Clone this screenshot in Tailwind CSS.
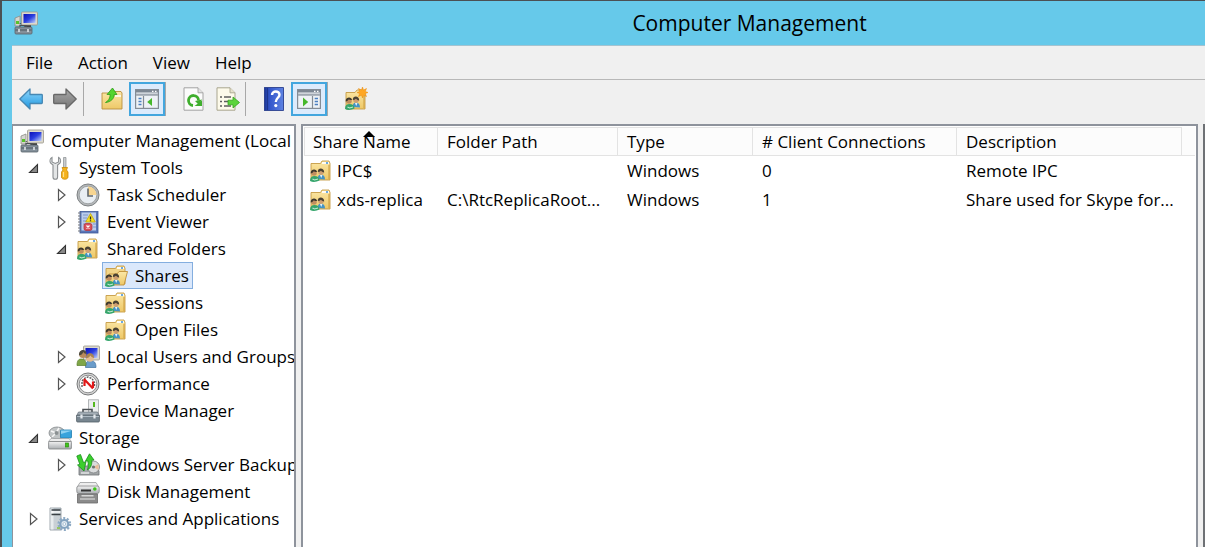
<!DOCTYPE html>
<html lang="en">
<head>
  <meta charset="UTF-8" />
  <meta name="viewport" content="width=device-width, initial-scale=1.0"/>
  <title>Computer Management</title>
  <script src="https://cdn.jsdelivr.net/npm/@tailwindcss/browser@4"></script>
</head>
<body class="h-screen overflow-hidden bg-[#66c9ea] border-t border-l-2 border-[#4b5054] text-black text-[17px] leading-[27px] font-['Open_Sans',sans-serif] flex flex-col">

  <!-- Icon set -->
  <svg class="absolute size-0" aria-hidden="true">
    <defs>
      <linearGradient id="g-screen" x1="0" y1="0" x2="1" y2="1">
        <stop offset="0" stop-color="#0a10b8"/><stop offset=".5" stop-color="#2b3fe0"/><stop offset="1" stop-color="#c3d4fb"/>
      </linearGradient>
      <linearGradient id="g-folder" x1="0" y1="0" x2="0" y2="1">
        <stop offset="0" stop-color="#fbe7a6"/><stop offset="1" stop-color="#eec867"/>
      </linearGradient>
      <linearGradient id="g-blue" x1="0" y1="0" x2="0" y2="1">
        <stop offset="0" stop-color="#8fd6fb"/><stop offset="1" stop-color="#1e97e0"/>
      </linearGradient>
      <linearGradient id="g-gray" x1="0" y1="0" x2="0" y2="1">
        <stop offset="0" stop-color="#a8a8a8"/><stop offset="1" stop-color="#757575"/>
      </linearGradient>
      <linearGradient id="g-metal" x1="0" y1="0" x2="0" y2="1">
        <stop offset="0" stop-color="#f2f2f2"/><stop offset="1" stop-color="#a9adb0"/>
      </linearGradient>
      <linearGradient id="g-help" x1="0" y1="0" x2="1" y2="0">
        <stop offset="0" stop-color="#1c3697"/><stop offset=".3" stop-color="#3558cc"/><stop offset="1" stop-color="#5f83e2"/>
      </linearGradient>
    </defs>

    <symbol id="i-computer" viewBox="0 0 24 24">
      <path d="M1 7l5-2v10H1z" fill="#d6d6d0" stroke="#8b8b86" stroke-width=".8"/>
      <path d="M2 10h3v3H2z" fill="#58c32a"/>
      <path d="M5 12l6 4h6v-2z" fill="#333"/>
      <rect x="7.500" y="1" width="16" height="13" rx="1" fill="#dcd9cd" stroke="#9a978c" stroke-width=".8"/>
      <rect x="9.500" y="3" width="12" height="9" fill="url(#g-screen)"/>
      <path d="M6 16v-1.500h6V16" fill="none" stroke="#4b5054" stroke-width="1.200"/>
      <rect x="1" y="16" width="17" height="7" rx="1" fill="#84909a" stroke="#59636b" stroke-width=".8"/>
      <path d="M1.500 19h16" stroke="#4d565e" stroke-width="1"/>
      <path d="M5 18v3M14 18v3" stroke="#dfe4e8" stroke-width="1.600"/>
    </symbol>

    <symbol id="i-tools" viewBox="0 0 24 24">
      <path d="M4 1.500c-2 1-2.500 3.500-1.500 5.500L5 9v12a2.300 2.300 0 0 0 4.600 0V9l2.500-2c1-2 .5-4.500-1.500-5.500V6L7.300 7.500 4 6z" fill="#e3e5e6" stroke="#8a8e91" stroke-width="1.100"/>
      <path d="M15.500 1.500h2.500V12h-2.500z" fill="#c9cccf" stroke="#8a8e91" stroke-width=".7"/>
      <path d="M14 11.500h5.500l-1 2.500 1.500 2v5c0 3-6.500 3-6.500 0v-5l1.500-2z" fill="#f5b21c" stroke="#c98a08" stroke-width=".8"/>
      <path d="M15.500 16v5" stroke="#fde08a" stroke-width="1.200"/>
    </symbol>

    <symbol id="i-clock" viewBox="0 0 24 24">
      <circle cx="12" cy="12" r="11" fill="#b5b8ba" stroke="#7e8284"/>
      <circle cx="12" cy="12" r="8.800" fill="#e9eef3" stroke="#8c9092" stroke-width=".7"/>
      <path d="M12 12V3.500a8.500 8.500 0 0 1 8.500 8.500z" fill="#f7d591"/>
      <path d="M12 5.500V13h5" fill="none" stroke="#62686d" stroke-width="1.600"/>
    </symbol>

    <symbol id="i-event" viewBox="0 0 24 24">
      <rect x="4" y="1.500" width="18" height="21.500" fill="#5a76b8" stroke="#3d5797" stroke-width=".8"/>
      <rect x="5.500" y="2.500" width="14.500" height="18" fill="#bccdec"/>
      <path d="M7 5h5M7 8h4M7 11h3M7 14h3M17 14h3M17 17h3" stroke="#7f97c8" stroke-width="1"/>
      <path d="M14.500 3.500l4.800 8.500H9.700z" fill="#f7e022" stroke="#bfa30f" stroke-width=".8"/>
      <path d="M14.500 6.500v3M14.500 10.200v1" stroke="#2b2b2b" stroke-width="1.300"/>
      <rect x="8" y="13.500" width="8" height="7" rx="2" fill="#d9505a" stroke="#b22f3a" stroke-width=".7"/>
      <path d="M10.500 15.500l3 3m0-3l-3 3" stroke="#fff" stroke-width="1.300"/>
      <path d="M2 3h3M2 6h3M2 9h3M2 12h3M2 15h3M2 18h3M2 21h3" stroke="#72777d" stroke-width="1.200"/>
    </symbol>

    <symbol id="i-people" viewBox="0 0 24 24">
      <path d="M8.500 20c0-3 1.300-4.500 3.500-4.500s4 1.500 4 5z" fill="#4593c4"/>
      <path d="M11 16l1.200 3 1.300-3z" fill="#e9f3fa"/>
      <path d="M1 22c0-3.500 1.500-5 4.500-5s5 1.500 5 4.500c-3 1.500-6.500 2-9.500.5z" fill="#35a56c"/>
      <path d="M3.500 20l2 1 3.500-1" stroke="#c1ead2" stroke-width="1.100" fill="none"/>
      <circle cx="5" cy="14" r="2.800" fill="#c08e60"/>
      <path d="M1.700 14.500C1 9.500 8 9.200 8 13c-1.800.2-2.800-.3-3.200-.8-.6 1-1.800 2-3.100 2.300z" fill="#3d382d"/>
      <circle cx="12" cy="13" r="2.800" fill="#cf9f72"/>
      <path d="M8.800 13c-.3-4.600 6.500-4.600 6.400.6-1.600-.3-2.800-1-3.200-1.800-.8.800-1.900 1.200-3.200 1.200z" fill="#4a4233"/>
    </symbol>

    <symbol id="i-share" viewBox="0 0 24 24">
      <path d="M2 4.500h9.500L13 2h7l1 2.500V21H2z" fill="url(#g-folder)" stroke="#c59b45" stroke-width=".9"/>
      <path d="M13 4h7" stroke="#fff" stroke-width="1.800"/>
      <path d="M17 4h2" stroke="#3c8ed8" stroke-width="1.600"/>
      <path d="M20 6v14" stroke="#d3a547" stroke-width="1.200"/>
      <use href="#i-people"/>
    </symbol>

    <symbol id="i-share-open" viewBox="0 0 24 24">
      <path d="M2 4.500h9.500L13 2h7l1 2.500V20H2z" fill="#f2d588" stroke="#c59b45" stroke-width=".9"/>
      <path d="M13 4h7" stroke="#fff" stroke-width="1.800"/>
      <path d="M17 4h2" stroke="#3c8ed8" stroke-width="1.600"/>
      <path d="M5 10h8l2-2.500h8.500L20 21H5z" fill="url(#g-folder)" stroke="#c08f38" stroke-width=".9"/>
      <use href="#i-people"/>
    </symbol>

    <symbol id="i-new-share" viewBox="0 0 24 24">
      <path d="M2 5.500h9L13 3h6l2 2.500V22H2z" fill="url(#g-folder)" stroke="#c59b45" stroke-width=".9"/>
      <path d="M20 9v12" stroke="#d3a547" stroke-width="1.200"/>
      <use href="#i-people"/>
      <path d="M18.500 0l1 3 3-1.500-1.200 3L24 5.500l-2.700 1 1.200 3-3-1.300-1 2.800-1-2.800-3 1.300 1.200-3-2.700-1 2.700-1-1.200-3 3 1.500z" fill="#ffa724" stroke="#e88a0b" stroke-width=".5"/>
    </symbol>

    <symbol id="i-users" viewBox="0 0 24 24">
      <rect x="7.500" y="1" width="16" height="14" rx="1" fill="#dcd9cd" stroke="#9a978c" stroke-width=".8"/>
      <rect x="9.500" y="3" width="12" height="10" fill="url(#g-screen)"/>
      <path d="M9.500 22.500c0-5 1.500-7 5-7s5.500 2 5.500 7z" fill="#6a9cca" stroke="#41719f" stroke-width=".7"/>
      <path d="M1 20.500c0-5 1.500-6.500 4.500-6.500s4.500 1.500 4.500 6.500z" fill="#7fa647" stroke="#5a7c2c" stroke-width=".7"/>
      <circle cx="6.800" cy="9.500" r="3.600" fill="#b98a5b"/>
      <path d="M3 10.500C2.500 3.500 11 3.500 10.500 9 9 9 8 8 7.500 7 6.500 9 5 10.200 3 10.500z" fill="#4d4a40"/>
      <circle cx="14" cy="13" r="3.800" fill="#e3bd93"/>
      <path d="M10 13.500c-.5-7 8.500-7 8-.5-2-.5-3-1.500-3.500-2.500-1 1.500-2.500 2.700-4.500 3z" fill="#a98552"/>
    </symbol>

    <symbol id="i-perf" viewBox="0 0 24 24">
      <circle cx="12" cy="12" r="11" fill="#d4d4d4" stroke="#77797a"/>
      <circle cx="12" cy="12" r="8.800" fill="#fff" stroke="#77797a" stroke-width=".8"/>
      <path d="M6 15V9l3-3 3-1 4 1.500 2.500 4V15" fill="none" stroke="#5c5c5c" stroke-width="1.400" stroke-dasharray="2 1"/>
      <path d="M8 7l9 9.500M8.500 7.500V14M17 16V9.500" fill="none" stroke="#e01818" stroke-width="2.200"/>
    </symbol>

    <symbol id="i-device" viewBox="0 0 24 24">
      <rect x="12.500" y=".8" width="10" height="14" fill="#eceeef" stroke="#a3a6a8" stroke-width=".8"/>
      <path d="M17 3h2v5h-2z" fill="#55b81f"/>
      <path d="M7 13v-2.500h9V13" fill="none" stroke="#4b5054" stroke-width="1.600"/>
      <path d="M2.500 13h19l2 4H.5z" fill="#a5afb7" stroke="#66707a" stroke-width=".7"/>
      <rect x=".6" y="16" width="22.800" height="7" rx="1" fill="#788690" stroke="#525d66" stroke-width=".8"/>
      <path d="M1 17.500h22" stroke="#aebac3" stroke-width="1"/>
      <path d="M5.500 15.500v4M18.500 15.500v4" stroke="#e4e9ed" stroke-width="2.200"/>
    </symbol>

    <symbol id="i-storage" viewBox="0 0 24 24">
      <ellipse cx="9" cy="7" rx="8" ry="6" fill="#bfc3c4" stroke="#85898b" stroke-width=".8"/>
      <path d="M3 5l5 2 3-5M8 7l-4 4" stroke="#f6f6f6" stroke-width="1.500" fill="none"/>
      <circle cx="8.500" cy="7" r="2" fill="#8b9092"/>
      <rect x="12.500" y="4" width="11" height="8" rx=".8" fill="#38a3dc" stroke="#1f7db0" stroke-width=".8"/>
      <path d="M13 8l10-3v-.5H13z" fill="#8fd2f2"/>
      <path d="M3 12.500h18l2.500 3H.5z" fill="#ececec" stroke="#96999b" stroke-width=".7"/>
      <rect x=".6" y="15.500" width="22.800" height="7.500" rx="1" fill="url(#g-metal)" stroke="#7d8082" stroke-width=".8"/>
      <rect x="17.500" y="17" width="3" height="4" fill="#3fc51a" stroke="#2a8c10" stroke-width=".7"/>
    </symbol>

    <symbol id="i-backup" viewBox="0 0 24 24">
      <path d="M3 13h17l3 5v4H3z" fill="#a2a6a8" stroke="#6d7173" stroke-width=".8"/>
      <circle cx="17.500" cy="14" r="6" fill="#dadcdd" stroke="#7c7f81" stroke-width=".8"/>
      <path d="M17.500 14l5-3v6z" fill="#e9bd9b"/>
      <circle cx="17.500" cy="14" r="1.600" fill="#6f7375"/>
      <path d="M.8 3L4.500 1.500l3 8L10 8.500 8 18 1.500 12l2.300-.7z" fill="#3ccf2d" stroke="#17911a" stroke-width=".8"/>
      <path d="M13.500.8L18 7l-2.300.3c.5 4-.8 7.500-4.200 9.700 1.200-3 .9-6 .3-9H9.500z" fill="#3ccf2d" stroke="#17911a" stroke-width=".8"/>
      <path d="M5 20h8" stroke="#e1e3e4" stroke-width="1.500"/>
    </symbol>

    <symbol id="i-disk" viewBox="0 0 24 24">
      <path d="M4 2.500h16l3 5H1z" fill="#eee" stroke="#9b9d9e" stroke-width=".8"/>
      <rect x=".8" y="6" width="22.400" height="7.500" rx="2" fill="url(#g-metal)" stroke="#858789" stroke-width=".8"/>
      <path d="M5 10.500h10" stroke="#333" stroke-width="2"/>
      <circle cx="18.800" cy="9" r="1.800" fill="#3fc51a"/>
      <path d="M1.500 14h20v9h-20z" fill="#8b8b8b" stroke="#6a6a6a" stroke-width=".8"/>
      <path d="M5.500 15h12v1.500h-12z" fill="#d8d8d8"/>
      <path d="M4 19h15" stroke="#c9c9c9" stroke-width="1.500"/>
    </symbol>

    <symbol id="i-services" viewBox="0 0 24 24">
      <path d="M2 1h11v22H2z" fill="#c9d0d5" stroke="#8c969d" stroke-width=".8"/>
      <path d="M2.500 1.500h3v21h-3z" fill="#e8ecee"/>
      <path d="M3.500 3h9M3.500 7.500h9" stroke="#3a4045" stroke-width="1.400"/>
      <path d="M3.500 5h9" stroke="#fff" stroke-width="1.200"/>
      <path d="M9 21h3" stroke="#8bc53a" stroke-width="1.600"/>
      <circle cx="16.300" cy="17" r="5.600" fill="none" stroke="#8eaac4" stroke-width="2.600" stroke-dasharray="2 1.520"/>
      <circle cx="16.300" cy="17" r="4" fill="#dfe9f1" stroke="#83a3c0" stroke-width="2.200"/>
      <circle cx="16.300" cy="17" r="1.400" fill="#fff" stroke="#83a3c0" stroke-width=".6"/>
    </symbol>

    <symbol id="i-back" viewBox="0 0 24 24">
      <path d="M.8 12L11 2v5.500h11.500q.8 0 .8.800v7.400q0 .8-.8.800H11V22z" fill="url(#g-blue)" stroke="#4687b3" stroke-width="1.300" stroke-linejoin="round"/>
    </symbol>
    <symbol id="i-forward" viewBox="0 0 24 24">
      <path d="M23.200 12L13 2v5.500H1.500q-.8 0-.8.800v7.400q0 .8.800.8H13V22z" fill="url(#g-gray)" stroke="#686868" stroke-width="1.300" stroke-linejoin="round"/>
    </symbol>
    <symbol id="i-up" viewBox="0 0 24 24">
      <path d="M2 6h8l1.500-1.500H21L22 6v16H2z" fill="url(#g-folder)" stroke="#b98f3e" stroke-width=".9"/>
      <path d="M15 9h6" stroke="#fff" stroke-width="1.500"/>
      <path d="M12.500 1L17 7.500h-2.800c0 4-3.200 7.500-8.700 8 3-1.500 4.700-4.500 4.700-8H7z" fill="#55d52e" stroke="#2c9c18" stroke-width=".8"/>
    </symbol>
    <symbol id="i-tree-pane" viewBox="0 0 24 24">
      <rect x=".6" y="2.600" width="22.800" height="18.800" fill="#eef2f6" stroke="#848c95" stroke-width="1.200"/>
      <path d="M1 3h22v2.500H1z" fill="#7d8793"/>
      <path d="M1 7.700h22" stroke="#a0a8b2" stroke-width="2.200"/>
      <path d="M17 4.300h1.500M20 4.300h1.500" stroke="#fff" stroke-width="1.200"/>
      <path d="M8.500 9v12" stroke="#848c95" stroke-width="1.200"/>
      <path d="M3.500 11.500h3M3.500 14.500h3M3.500 17.500h3" stroke="#4b7fc0" stroke-width="1.300"/>
      <path d="M17 11v8l-4.800-4z" fill="#46b82c"/>
    </symbol>
    <symbol id="i-action-pane" viewBox="0 0 24 24">
      <rect x=".6" y="2.600" width="22.800" height="18.800" fill="#eef2f6" stroke="#848c95" stroke-width="1.200"/>
      <path d="M1 3h22v2.500H1z" fill="#7d8793"/>
      <path d="M1 7.700h22" stroke="#a0a8b2" stroke-width="2.200"/>
      <path d="M17 4.300h1.500M20 4.300h1.500" stroke="#fff" stroke-width="1.200"/>
      <path d="M15.500 9v12" stroke="#848c95" stroke-width="1.200"/>
      <path d="M17.700 11.500h3.300M17.700 14.500h3.300M17.700 17.500h3.300" stroke="#4b7fc0" stroke-width="1.300"/>
      <path d="M6 10.500v9l5.200-4.500z" fill="#46b82c"/>
    </symbol>
    <symbol id="i-refresh" viewBox="0 0 24 24">
      <path d="M2 .8h14l5 5v17.400H2z" fill="#fbfbfb" stroke="#a2a2a2" stroke-width="1"/>
      <path d="M16 .8v5h5" fill="#e2e2e2" stroke="#a2a2a2" stroke-width=".9"/>
      <path d="M11 18.500a5 5 0 1 1 5.500-5" fill="none" stroke="#3fae2d" stroke-width="2.800"/>
      <path d="M20 13.500v5.500h-7.500z" fill="#3fae2d"/>
      <path d="M20 12.500l-7 1.500 4 4z" fill="#3fae2d"/>
    </symbol>
    <symbol id="i-export" viewBox="0 0 24 24">
      <path d="M1 .8h13l5 5v17.400H1z" fill="#fdfaea" stroke="#a9a58f" stroke-width="1"/>
      <path d="M14 .8v5h5" fill="#e6e2cc" stroke="#a9a58f" stroke-width=".9"/>
      <path d="M4 10h2M4 14.500h2M4 19h2M8 10h7M8 14.500h4M8 19h7" stroke="#5d5d5d" stroke-width="1.400"/>
      <path d="M12 13.200h5V10l6.500 5.500L17 21v-3.200h-5z" fill="#5cd43c" stroke="#35a31e" stroke-width=".8"/>
    </symbol>
    <symbol id="i-help" viewBox="0 0 24 24">
      <rect x="2.500" y=".6" width="19" height="22.800" fill="url(#g-help)" stroke="#1b3184" stroke-width=".8"/>
      <path d="M5.500 1v22" stroke="#1b3184" stroke-width=".8"/>
      <path d="M10 8c0-4.800 7.500-4.500 7.500-.3 0 3-3.700 3.300-3.700 7.300" fill="none" stroke="#fff" stroke-width="2.400"/>
      <circle cx="13.800" cy="18.600" r="1.600" fill="#fff"/>
    </symbol>

    <symbol id="i-closed" viewBox="0 0 12 14">
      <path d="M2.500 1.500v11l6.500-5.500z" fill="#fff" stroke="#555" stroke-width="1.200"/>
    </symbol>
    <symbol id="i-opened" viewBox="0 0 12 14">
      <path d="M9.500 3.500v8H1.500z" fill="#8a8a8a" stroke="#333" stroke-width="1.100"/>
    </symbol>
  </svg>

  <!-- Title bar -->
  <header class="h-11 shrink-0 flex items-center pl-3">
    <svg class="size-6"><use href="#i-computer"/></svg>
    <h1 class="flex-1 pl-64 text-center text-[21px]">Computer Management</h1>
  </header>

  <div class="flex-1 min-h-0 ml-[10px] bg-[#f0f0f0] flex flex-col border-t border-[#a5c3d0]">

    <!-- Menu bar -->
    <nav class="h-[34px] shrink-0 flex items-center gap-[25px] px-[14px] border-b border-[#b8b8b8]">
      <button>File</button>
      <button>Action</button>
      <button>View</button>
      <button>Help</button>
    </nav>

    <!-- Toolbar -->
    <div class="h-11 shrink-0 flex items-start pt-[2px] pl-[2px]" role="toolbar" aria-label="Standard">
      <button aria-label="Back" class="w-[34px] h-[34px] grid place-items-center"><svg class="size-6"><use href="#i-back"/></svg></button>
      <button aria-label="Forward" class="w-[34px] h-[34px] grid place-items-center"><svg class="size-6"><use href="#i-forward"/></svg></button>
      <span class="w-px h-[34px] ml-px mr-[11px] bg-[#a8a8a8]"></span>
      <button aria-label="Up one level" class="w-[34px] h-[34px] grid place-items-center"><svg class="size-6"><use href="#i-up"/></svg></button>
      <button aria-label="Show/Hide console tree" aria-pressed="true" class="w-9 h-[34px] grid place-items-center bg-[#dcebfc] border-2 border-[#43a6de]"><svg class="size-6"><use href="#i-tree-pane"/></svg></button>
      <span class="w-px h-[34px] mr-[11px] bg-[#a8a8a8]"></span>
      <button aria-label="Refresh" class="w-[34px] h-[34px] grid place-items-center"><svg class="size-6"><use href="#i-refresh"/></svg></button>
      <button aria-label="Export list" class="w-[34px] h-[34px] grid place-items-center"><svg class="size-6"><use href="#i-export"/></svg></button>
      <span class="w-px h-[34px] mr-[11px] bg-[#a8a8a8]"></span>
      <button aria-label="Help" class="w-[34px] h-[34px] grid place-items-center"><svg class="size-6"><use href="#i-help"/></svg></button>
      <button aria-label="Show/Hide action pane" aria-pressed="true" class="w-9 h-[34px] grid place-items-center bg-[#dcebfc] border-2 border-[#43a6de]"><svg class="size-6"><use href="#i-action-pane"/></svg></button>
      <span class="w-px h-[34px] mr-[11px] bg-[#a8a8a8]"></span>
      <button aria-label="New share" class="w-[34px] h-[34px] grid place-items-center"><svg class="size-6"><use href="#i-new-share"/></svg></button>
    </div>

    <div class="flex-1 min-h-0 flex gap-[5px]">

      <!-- Console tree -->
      <aside class="w-[284px] shrink-0 bg-white border-2 border-b-0 border-l border-[#8e939c] pt-px overflow-hidden whitespace-nowrap">
        <ul>
          <li class="h-[27px] flex pl-[5px]">
            <button class="shrink-0 flex items-center gap-[7px] border border-transparent px-px"><svg class="size-6 shrink-0"><use href="#i-computer"/></svg>Computer Management (Local</button>
          </li>
          <li class="h-[27px] flex pl-[5px]">
            <button aria-label="Collapse" class="w-7 shrink-0 pl-1 grid place-items-center"><svg class="w-3 h-[14px]"><use href="#i-opened"/></svg></button>
            <button class="shrink-0 flex items-center gap-[7px] border border-transparent px-px"><svg class="size-6 shrink-0"><use href="#i-tools"/></svg>System Tools</button>
          </li>
          <li class="h-[27px] flex pl-[33px]">
            <button aria-label="Expand" class="w-7 shrink-0 pl-1 grid place-items-center"><svg class="w-3 h-[14px]"><use href="#i-closed"/></svg></button>
            <button class="shrink-0 flex items-center gap-[7px] border border-transparent px-px"><svg class="size-6 shrink-0"><use href="#i-clock"/></svg>Task Scheduler</button>
          </li>
          <li class="h-[27px] flex pl-[33px]">
            <button aria-label="Expand" class="w-7 shrink-0 pl-1 grid place-items-center"><svg class="w-3 h-[14px]"><use href="#i-closed"/></svg></button>
            <button class="shrink-0 flex items-center gap-[7px] border border-transparent px-px"><svg class="size-6 shrink-0"><use href="#i-event"/></svg>Event Viewer</button>
          </li>
          <li class="h-[27px] flex pl-[33px]">
            <button aria-label="Collapse" class="w-7 shrink-0 pl-1 grid place-items-center"><svg class="w-3 h-[14px]"><use href="#i-opened"/></svg></button>
            <button class="shrink-0 flex items-center gap-[7px] border border-transparent px-px"><svg class="size-6 shrink-0"><use href="#i-share"/></svg>Shared Folders</button>
          </li>
          <li class="h-[27px] flex pl-[89px]">
            <button aria-current="true" class="shrink-0 flex items-center gap-[7px] border border-[#84aedf] bg-[#dbe8fb] pl-px pr-[3px]"><svg class="size-6 shrink-0"><use href="#i-share-open"/></svg>Shares</button>
          </li>
          <li class="h-[27px] flex pl-[89px]">
            <button class="shrink-0 flex items-center gap-[7px] border border-transparent px-px"><svg class="size-6 shrink-0"><use href="#i-share"/></svg>Sessions</button>
          </li>
          <li class="h-[27px] flex pl-[89px]">
            <button class="shrink-0 flex items-center gap-[7px] border border-transparent px-px"><svg class="size-6 shrink-0"><use href="#i-share"/></svg>Open Files</button>
          </li>
          <li class="h-[27px] flex pl-[33px]">
            <button aria-label="Expand" class="w-7 shrink-0 pl-1 grid place-items-center"><svg class="w-3 h-[14px]"><use href="#i-closed"/></svg></button>
            <button class="shrink-0 flex items-center gap-[7px] border border-transparent px-px"><svg class="size-6 shrink-0"><use href="#i-users"/></svg>Local Users and Groups</button>
          </li>
          <li class="h-[27px] flex pl-[33px]">
            <button aria-label="Expand" class="w-7 shrink-0 pl-1 grid place-items-center"><svg class="w-3 h-[14px]"><use href="#i-closed"/></svg></button>
            <button class="shrink-0 flex items-center gap-[7px] border border-transparent px-px"><svg class="size-6 shrink-0"><use href="#i-perf"/></svg>Performance</button>
          </li>
          <li class="h-[27px] flex pl-[61px]">
            <button class="shrink-0 flex items-center gap-[7px] border border-transparent px-px"><svg class="size-6 shrink-0"><use href="#i-device"/></svg>Device Manager</button>
          </li>
          <li class="h-[27px] flex pl-[5px]">
            <button aria-label="Collapse" class="w-7 shrink-0 pl-1 grid place-items-center"><svg class="w-3 h-[14px]"><use href="#i-opened"/></svg></button>
            <button class="shrink-0 flex items-center gap-[7px] border border-transparent px-px"><svg class="size-6 shrink-0"><use href="#i-storage"/></svg>Storage</button>
          </li>
          <li class="h-[27px] flex pl-[33px]">
            <button aria-label="Expand" class="w-7 shrink-0 pl-1 grid place-items-center"><svg class="w-3 h-[14px]"><use href="#i-closed"/></svg></button>
            <button class="shrink-0 flex items-center gap-[7px] border border-transparent px-px"><svg class="size-6 shrink-0"><use href="#i-backup"/></svg>Windows Server Backup</button>
          </li>
          <li class="h-[27px] flex pl-[61px]">
            <button class="shrink-0 flex items-center gap-[7px] border border-transparent px-px"><svg class="size-6 shrink-0"><use href="#i-disk"/></svg>Disk Management</button>
          </li>
          <li class="h-[27px] flex pl-[5px]">
            <button aria-label="Expand" class="w-7 shrink-0 pl-1 grid place-items-center"><svg class="w-3 h-[14px]"><use href="#i-closed"/></svg></button>
            <button class="shrink-0 flex items-center gap-[7px] border border-transparent px-px"><svg class="size-6 shrink-0"><use href="#i-services"/></svg>Services and Applications</button>
          </li>
        </ul>
      </aside>

      <!-- Share list -->
      <main class="flex-1 min-w-0 bg-white border-2 border-b-0 border-[#8e939c] pt-px px-px overflow-hidden">
        <table class="w-full table-fixed border-separate border-spacing-0 text-left whitespace-nowrap">
          <thead>
            <tr class="h-7 bg-[#fcfcfc]">
              <th class="w-[134px] p-0 pl-2 font-normal border border-[#e3e3e3] relative">Share Name
                <svg class="absolute left-[58px] top-[3px] w-3 h-[7px]" viewBox="0 0 12 7"><path d="M6 0l6 6H0z"/></svg>
              </th>
              <th class="w-[180px] p-0 pl-[9px] font-normal border-y border-r border-[#e3e3e3]">Folder Path</th>
              <th class="w-[135px] p-0 pl-[9px] font-normal border-y border-r border-[#e3e3e3]">Type</th>
              <th class="w-[204px] p-0 pl-[9px] font-normal border-y border-r border-[#e3e3e3]"># Client Connections</th>
              <th class="w-[225px] p-0 pl-[9px] font-normal border-y border-r border-[#e3e3e3]">Description</th>
              <th class="p-0 border-b border-[#e3e3e3]"></th>
            </tr>
          </thead>
          <tbody>
            <tr class="h-[29px]">
              <td class="p-0 pl-[5px]"><span class="flex items-center gap-1"><svg class="size-6"><use href="#i-share"/></svg>IPC$</span></td>
              <td class="p-0 pl-[9px]"></td>
              <td class="p-0 pl-[9px]">Windows</td>
              <td class="p-0 pl-[9px]">0</td>
              <td class="p-0 pl-[9px]">Remote IPC</td>
              <td></td>
            </tr>
            <tr class="h-[29px]">
              <td class="p-0 pl-[5px]"><span class="flex items-center gap-1"><svg class="size-6"><use href="#i-share"/></svg>xds-replica</span></td>
              <td class="p-0 pl-[9px]">C:\RtcReplicaRoot...</td>
              <td class="p-0 pl-[9px]">Windows</td>
              <td class="p-0 pl-[9px]">1</td>
              <td class="p-0 pl-[9px]">Share used for Skype for...</td>
              <td></td>
            </tr>
          </tbody>
        </table>
      </main>

      <!-- Action pane edge -->
      <div class="w-[2px] shrink-0 bg-[#6e7175]"></div>
    </div>
  </div>

</body>
</html>
